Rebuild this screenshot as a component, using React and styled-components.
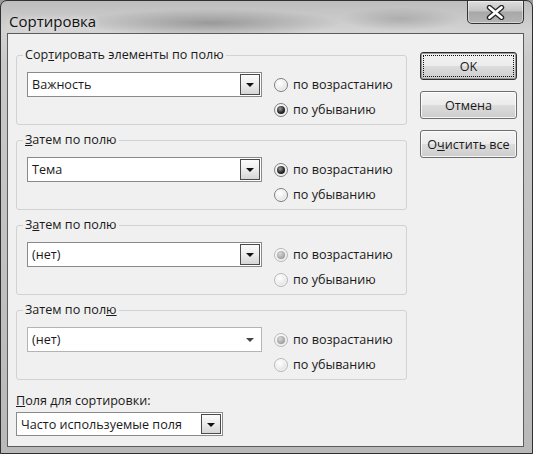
import React from "react";
import styled, { createGlobalStyle, css } from "styled-components";

const GlobalStyle = createGlobalStyle`
  html, body {
    margin: 0;
    padding: 0;
    background: #9a9a9a;
  }
  * {
    box-sizing: border-box;
  }
`;

const FONT = `"Open Sans", "Noto Sans", "DejaVu Sans", sans-serif`;

// ---- window chrome ----------------

const Window = styled.div`
  width: 533px;
  height: 454px;
  display: flex;
  flex-direction: column;
  padding: 0 8px 6px 6px;
  border: 1px solid #303030;
  border-radius: 7px 7px 0 0;
  font-family: ${FONT};
  color: #1a1a1a;
  background:
    radial-gradient(ellipse 130px 14px at 210px 22px, rgba(90, 90, 90, 0.45), rgba(90, 90, 90, 0) 100%),
    radial-gradient(ellipse 60px 12px at 400px 18px, rgba(120, 120, 120, 0.35), rgba(120, 120, 120, 0) 100%),
    linear-gradient(180deg, #bdbdbd 0%, #d3d3d3 30px, #c9c9c9 60px, #b9b9b9 100%);
`;

const TitleBar = styled.div`
  height: 32px;
  flex: none;
  display: flex;
  align-items: flex-start;
  justify-content: space-between;
  padding-left: 2px;
`;

const Title = styled.div`
  padding-top: 10px;
  font-size: 15px;
  line-height: 20px;
  color: #111;
  text-shadow: 0 0 6px rgba(255, 255, 255, 0.9);
`;

const CloseButton = styled.div`
  width: 57px;
  height: 23px;
  display: flex;
  align-items: center;
  justify-content: center;
  border: 1px solid #333;
  border-top: none;
  border-radius: 0 0 5px 5px;
  background: linear-gradient(180deg, #dedede 0%, #c4c4c4 45%, #a8a8a8 50%, #b4b4b4 100%);
  box-shadow: inset 0 0 0 1px rgba(255, 255, 255, 0.45);
`;

const Client = styled.div`
  flex: 1;
  display: flex;
  gap: 13px;
  padding: 12px 6px 0 8px;
  border: 1px solid #5c5c5c;
  background: #f0f0f0;
`;

// ---- columns ----------------

const MainColumn = styled.div`
  width: 391px;
  display: flex;
  flex-direction: column;
  gap: 6px;
`;

const SideColumn = styled.div`
  width: 97px;
  display: flex;
  flex-direction: column;
  gap: 11px;
  padding-top: 6px;
`;

// ---- group box ----------------

const Group = styled.fieldset`
  margin: 0;
  padding: 8px 10px 2px 10px;
  border: 1px solid #d2d2d2;
  border-radius: 3px;
  display: flex;
  gap: 12px;
`;

const Legend = styled.legend`
  margin-left: -4px;
  padding: 0 2px;
  font-size: 12.6px;
  line-height: 18px;
`;

const RadioColumn = styled.div`
  display: flex;
  flex-direction: column;
`;

// ---- combo box ----------------

const Combo = styled.div`
  width: ${(p) => p.$width}px;
  height: ${(p) => p.$height}px;
  display: flex;
  align-items: center;
  justify-content: space-between;
  padding: 1px 1px 1px 4px;
  border: 1px solid ${(p) => (p.$disabled ? "#b4b4b4" : "#8a8a8a")};
  background: #fff;
  font-size: 12.6px;
  color: #1a1a1a;
`;

const ArrowBox = styled.div`
  width: 20px;
  height: 100%;
  display: flex;
  align-items: center;
  justify-content: center;
  ${(p) =>
    p.$disabled
      ? css`
          border: 1px solid transparent;
        `
      : css`
          border: 1px solid #4a4a4a;
          background: linear-gradient(180deg, #fbfbfb 0%, #ececec 50%, #d6d6d6 100%);
        `}
`;

const Arrow = styled.span`
  width: 0;
  height: 0;
  border-left: 4px solid transparent;
  border-right: 4px solid transparent;
  border-top: 4px solid ${(p) => (p.$disabled ? "#444" : "#111")};
  margin-top: 1px;
`;

// ---- radio ----------------

const RadioRow = styled.div`
  height: 25px;
  display: flex;
  align-items: center;
  gap: 5px;
  font-size: 12.6px;
  white-space: nowrap;
`;

const RadioCircle = styled.span`
  width: 14px;
  height: 14px;
  flex: none;
  border-radius: 50%;
  display: flex;
  align-items: center;
  justify-content: center;
  border: 1px solid ${(p) => (p.$disabled ? "#b8b8b8" : "#7e7e7e")};
  background: radial-gradient(circle at 40% 35%, #ffffff 0%, #eeeeee 45%, #cfcfcf 100%);
  box-shadow: inset 0 0 0 1px rgba(255, 255, 255, 0.7);
`;

const RadioDot = styled.span`
  width: 8px;
  height: 8px;
  border-radius: 50%;
  background: ${(p) =>
    p.$disabled
      ? "radial-gradient(circle at 40% 35%, #d8d8d8 0%, #a8a8a8 60%, #8c8c8c 100%)"
      : "radial-gradient(circle at 40% 35%, #9a9a9a 0%, #2a2a2a 55%, #050505 100%)"};
`;

// ---- buttons ----------------

const Button = styled.button`
  height: 28px;
  width: 100%;
  padding: 0;
  font-family: ${FONT};
  font-size: 12.6px;
  color: #1a1a1a;
  border: 1px solid ${(p) => (p.$default ? "#2e2e2e" : "#6e6e6e")};
  border-radius: 3px;
  background: linear-gradient(180deg, #f4f4f4 0%, #ececec 48%, #dcdcdc 52%, #cdcdcd 100%);
  box-shadow: inset 0 0 0 1px ${(p) => (p.$default ? "#9a9a9a" : "rgba(255, 255, 255, 0.8)")};
  ${(p) =>
    p.$default &&
    css`
      outline: 1px dotted #111;
      outline-offset: -4px;
    `}
`;

// ---- bottom field ----------------

const FieldLabel = styled.div`
  margin-top: 6px;
  font-size: 12.6px;
  line-height: 18px;
`;

const BottomCombo = styled.div`
  margin-top: -4px;
`;

const CloseGlyph = () => (
  <svg width="19" height="15" viewBox="0 0 19 15">
    <path d="M3.5 2.5 L15.5 12.5 M15.5 2.5 L3.5 12.5" stroke="#262626" strokeWidth="5.4" strokeLinecap="round" />
    <path d="M3.5 2.5 L15.5 12.5 M15.5 2.5 L3.5 12.5" stroke="#ffffff" strokeWidth="2.8" strokeLinecap="round" />
  </svg>
);

const ComboBox = ({ value, width, height = 25, disabled }) => (
  <Combo $width={width} $height={height} $disabled={disabled}>
    <span>{value}</span>
    <ArrowBox $disabled={disabled}>
      <Arrow $disabled={disabled} />
    </ArrowBox>
  </Combo>
);

const Radio = ({ label, checked, disabled }) => (
  <RadioRow>
    <RadioCircle $disabled={disabled}>{checked && <RadioDot $disabled={disabled} />}</RadioCircle>
    {label}
  </RadioRow>
);

const SortGroup = ({ legend, value, ascending, radiosDisabled, comboDisabled }) => (
  <Group>
    <Legend>{legend}</Legend>
    <ComboBox value={value} width={235} disabled={comboDisabled} />
    <RadioColumn>
      <Radio label="по возрастанию" checked={ascending} disabled={radiosDisabled} />
      <Radio label="по убыванию" checked={!ascending} disabled={radiosDisabled} />
    </RadioColumn>
  </Group>
);

const App = () => (
  <>
    <GlobalStyle />
    <Window>
      <TitleBar>
        <Title>Сортировка</Title>
        <CloseButton>
          <CloseGlyph />
        </CloseButton>
      </TitleBar>
      <Client>
        <MainColumn>
          <SortGroup
            legend={<>Сор<u>т</u>ировать элементы по полю</>}
            value="Важность"
            ascending={false}
          />
          <SortGroup legend={<><u>З</u>атем по полю</>} value="Тема" ascending />
          <SortGroup legend={<>З<u>а</u>тем по полю</>} value="(нет)" ascending radiosDisabled />
          <SortGroup
            legend={<>Затем по пол<u>ю</u></>}
            value="(нет)"
            ascending
            radiosDisabled
            comboDisabled
          />
          <FieldLabel>
            <u>П</u>оля для сортировки:
          </FieldLabel>
          <BottomCombo>
            <ComboBox value="Часто используемые поля" width={207} height={24} />
          </BottomCombo>
        </MainColumn>
        <SideColumn>
          <Button $default>OK</Button>
          <Button>Отмена</Button>
          <Button>
            О<u>ч</u>истить все
          </Button>
        </SideColumn>
      </Client>
    </Window>
  </>
);

export default App;
